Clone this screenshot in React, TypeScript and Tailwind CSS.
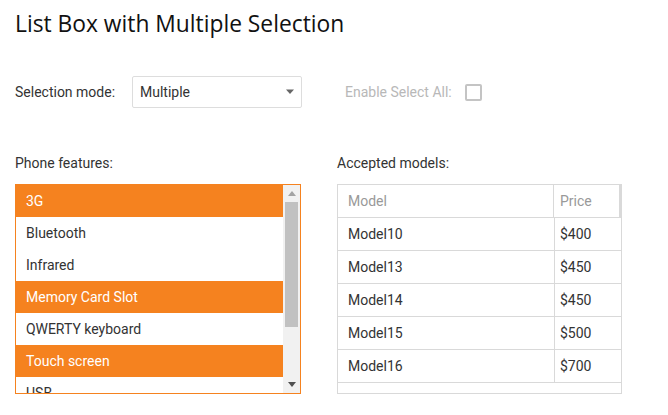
const features = [
  { name: "3G", selected: true },
  { name: "Bluetooth", selected: false },
  { name: "Infrared", selected: false },
  { name: "Memory Card Slot", selected: true },
  { name: "QWERTY keyboard", selected: false },
  { name: "Touch screen", selected: true },
  { name: "USB", selected: false },
];

const models = [
  { model: "Model10", price: "$400" },
  { model: "Model13", price: "$450" },
  { model: "Model14", price: "$450" },
  { model: "Model15", price: "$500" },
  { model: "Model16", price: "$700" },
];

function App() {
  return (
    <div className="min-h-[415px] w-[668px] bg-white font-['Roboto',sans-serif] text-[14px] text-[#333]">
      <h1 className="px-[15px] pt-[9px] font-['Open_Sans',sans-serif] text-[22.8px] leading-[30px] text-[#111]">
        List Box with Multiple Selection
      </h1>

      <div className="mt-[37px] flex items-center px-[15px]">
        <span className="w-[117px]">Selection mode:</span>
        <div className="flex h-[32px] w-[170px] items-center justify-between rounded-[2px] border border-[#ddd] pl-[7px] pr-[6px]">
          <span>Multiple</span>
          <svg width="10" height="6" viewBox="0 0 10 6">
            <path d="M1 0.5h8L5 5z" fill="#666" />
          </svg>
        </div>
        <span className="ml-[43px] text-[#b8b8b8]">Enable Select All:</span>
        <span className="ml-[13px] h-[17px] w-[17px] rounded-[2px] border-2 border-[#c4c4c4]" />
      </div>

      <div className="mt-[47px] flex px-[15px]">
        <div className="w-[286px]">
          <div className="mb-[12px] leading-[17px]">Phone features:</div>
          <div className="flex h-[210px] border border-[#f5821f]">
            <div className="flex-1 overflow-hidden">
              {features.map((f) => (
                <div
                  key={f.name}
                  className={
                    f.selected
                      ? "h-[32px] bg-[#f5821f] pl-[10px] leading-[32px] text-white"
                      : "h-[32px] pl-[10px] leading-[32px] text-[#333]"
                  }
                >
                  {f.name}
                </div>
              ))}
            </div>
            <div className="flex w-[17px] flex-col items-center bg-[#f1f1f1]">
              <div className="flex h-[17px] items-center justify-center">
                <svg width="8" height="5" viewBox="0 0 8 5">
                  <path d="M0 5h8L4 0z" fill="#a3a3a3" />
                </svg>
              </div>
              <div className="h-[125px] w-[13px] bg-[#c1c1c1]" />
              <div className="flex-1" />
              <div className="flex h-[17px] items-center justify-center">
                <svg width="8" height="5" viewBox="0 0 8 5">
                  <path d="M0 0h8L4 5z" fill="#505050" />
                </svg>
              </div>
            </div>
          </div>
        </div>

        <div className="ml-[36px] w-[285px]">
          <div className="mb-[12px] leading-[17px]">Accepted models:</div>
          <div className="h-[210px] border border-[#d9d9d9]">
            <div className="flex h-[33px] border-b border-[#d9d9d9] text-[#999]">
              <div className="w-[216px] border-r border-[#d9d9d9] pl-[10px] leading-[32px]">Model</div>
              <div className="flex-1 border-r-2 border-[#d9d9d9] pl-[6px] leading-[32px]">Price</div>
            </div>
            {models.map((m) => (
              <div key={m.model} className="flex h-[33px] border-b border-[#d9d9d9]">
                <div className="w-[217px] border-r border-[#d9d9d9] pl-[10px] leading-[32px]">{m.model}</div>
                <div className="flex-1 pl-[5px] leading-[32px]">{m.price}</div>
              </div>
            ))}
          </div>
        </div>
      </div>
    </div>
  );
}

export default App;
